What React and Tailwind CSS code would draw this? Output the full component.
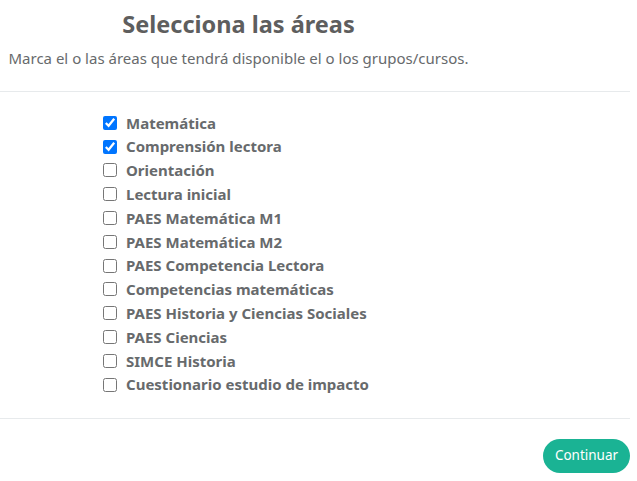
import React from "react";

const areas = [
  ["Matemática", true],
  ["Comprensión lectora", true],
  ["Orientación", false],
  ["Lectura inicial", false],
  ["PAES Matemática M1", false],
  ["PAES Matemática M2", false],
  ["PAES Competencia Lectora", false],
  ["Competencias matemáticas", false],
  ["PAES Historia y Ciencias Sociales", false],
  ["PAES Ciencias", false],
  ["SIMCE Historia", false],
  ["Cuestionario estudio de impacto", false],
];

export default function App() {
  return (
    <div className="w-[630px] bg-white text-[#676a6c]" style={{ fontFamily: '"Noto Sans", sans-serif' }}>
      <div className="w-[477px] text-center pt-[8px]">
        <h2 className="text-[23.5px] font-bold leading-[32px] text-[#5e5e5e]">Selecciona las áreas</h2>
        <p className="mt-[8px] text-[15px] leading-[20px]">Marca el o las áreas que tendrá disponible el o los grupos/cursos.</p>
      </div>
      <div className="mt-[23px] border-t border-[#e7eaec]" />
      <div className="pl-[103px] pt-[19px] pb-[21px] flex flex-col">
        {areas.map(([label, checked]) => (
          <label key={label} className="flex items-center h-[23.8px] gap-[9px] text-[15px] font-bold">
            <input type="checkbox" defaultChecked={checked} className="w-[14px] h-[14px] m-0 accent-[#0075ff]" />
            <span>{label}</span>
          </label>
        ))}
      </div>
      <div className="border-t border-[#e7eaec]" />
      <div className="flex justify-end pt-[20px] pb-[8px]">
        <button className="h-[34px] w-[87px] rounded-full bg-[#1ab394] text-white text-[13.5px]">Continuar</button>
      </div>
    </div>
  );
}
